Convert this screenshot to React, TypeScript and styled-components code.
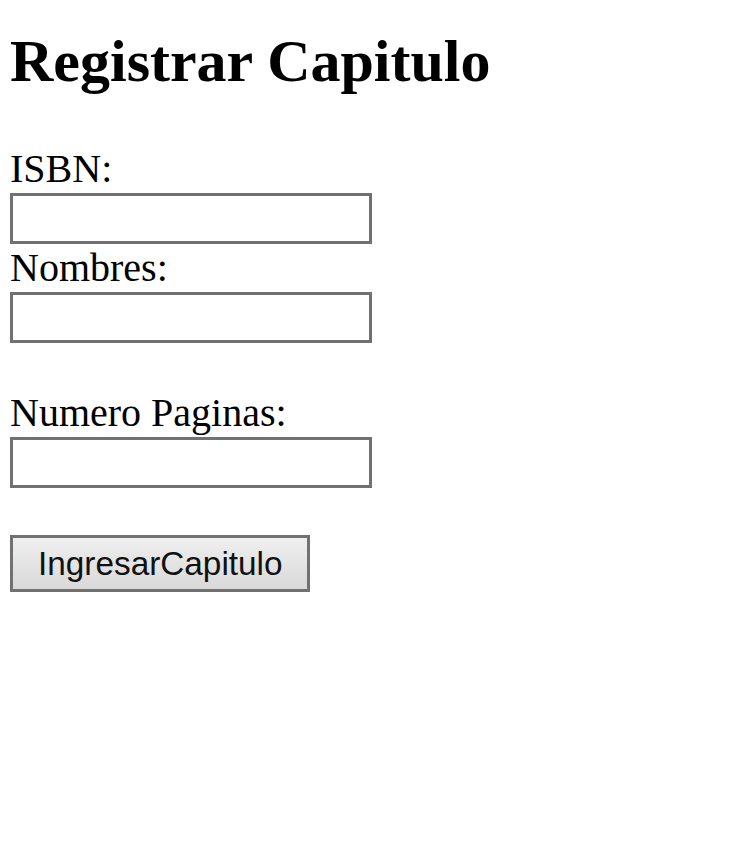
import React from "react";
import styled, { createGlobalStyle } from "styled-components";

const GlobalStyle = createGlobalStyle`
  html, body {
    margin: 0;
    padding: 0;
    background: #ffffff;
  }
  body {
    font-family: "Liberation Serif", "Times New Roman", serif;
    color: #000000;
  }
`;

const Page = styled.section`
  padding: 27px 10px;
`;

const Title = styled.h1`
  margin: 0 0 49px;
  font-family: "Liberation Serif", "Times New Roman", serif;
  font-size: 60px;
  font-weight: bold;
  line-height: 69px;
`;

const Form = styled.form`
  display: flex;
  flex-direction: column;
  align-items: flex-start;
`;

const Field = styled.div<{ $spaceBefore?: number }>`
  display: flex;
  flex-direction: column;
  align-items: flex-start;
  margin-top: ${(p) => p.$spaceBefore ?? 0}px;
`;

const FieldLabel = styled.label`
  font-family: "Liberation Serif", "Times New Roman", serif;
  font-size: 40px;
  line-height: 48px;
  color: #000;
`;

const TextInput = styled.input`
  box-sizing: border-box;
  width: 362px;
  height: 51px;
  margin: 0;
  padding: 2px 5px;
  border: 3px solid #717171;
  border-radius: 0;
  background: #ffffff;
  font-family: "Liberation Sans", Arial, sans-serif;
  font-size: 33px;
  outline: none;
`;

const SubmitButton = styled.button<{ $spaceBefore?: number }>`
  box-sizing: border-box;
  width: 300px;
  height: 57px;
  margin: ${(p) => p.$spaceBefore ?? 0}px 0 0;
  padding: 0 25px;
  border: 3px solid #717171;
  border-radius: 0;
  background: linear-gradient(#efefef, #d9d9d9);
  font-family: "Liberation Sans", Arial, sans-serif;
  font-size: 33.33px;
  line-height: 38px;
  color: #111;
  cursor: pointer;
`;

const fields = [
  { id: "isbn", label: "ISBN:", space: 0 },
  { id: "nombres", label: "Nombres:", space: 0 },
  { id: "paginas", label: "Numero Paginas:", space: 46 },
];

export default function App() {
  return (
    <>
      <GlobalStyle />
      <Page>
        <Title>Registrar Capitulo</Title>
        <Form onSubmit={(e) => e.preventDefault()}>
          {fields.map((f) => (
            <Field key={f.id} $spaceBefore={f.space}>
              <FieldLabel htmlFor={f.id}>{f.label}</FieldLabel>
              <TextInput id={f.id} type="text" />
            </Field>
          ))}
          <SubmitButton type="submit" $spaceBefore={47}>
            IngresarCapitulo
          </SubmitButton>
        </Form>
      </Page>
    </>
  );
}
